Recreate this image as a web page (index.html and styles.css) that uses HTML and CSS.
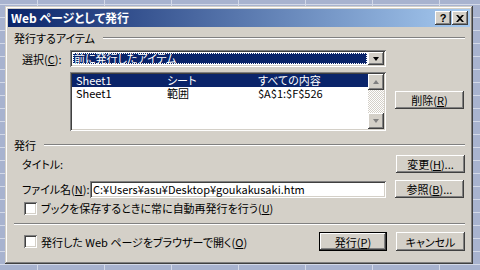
FILE: index.html
```html
<!DOCTYPE html>
<html lang="ja">
<head>
  <meta charset="UTF-8" />
  <title>Web ページとして発行</title>
  <link rel="stylesheet" href="styles.css">
</head>
<body>
  <div class="dialog">
    <div class="titlebar">
      <span class="title">Web ページとして発行</span>
      <div class="tb-buttons">
        <span class="tb-btn help">?</span>
        <span class="tb-btn">
          <svg width="8" height="7" viewBox="0 0 8 7"><path d="M0 0h2l2 2 2-2h2L5 3.5 8 7H6L4 5 2 7H0l3-3.5z" fill="#000"/></svg>
        </span>
      </div>
    </div>

    <div class="content">
      <!-- items to publish -->
      <div class="group"><span>発行するアイテム</span><div class="rule"></div></div>

      <div class="row select-row">
        <label class="lbl">選択(<u>C</u>):</label>
        <div class="combo">
          <div class="combo-text"><span>前に発行したアイテム</span></div>
          <div class="drop-btn"><span class="arrow-down"></span></div>
        </div>
      </div>

      <div class="row list-row">
        <div class="lbl"></div>
        <div class="listbox">
          <div class="items">
            <div class="item selected"><span>Sheet1</span><span>シート</span><span>すべての内容</span></div>
            <div class="item"><span>Sheet1</span><span>範囲</span><span>$A$1:$F$526</span></div>
          </div>
          <div class="scrollbar">
            <div class="sb-btn"><span class="arrow-up"></span></div>
            <div class="sb-track"></div>
            <div class="sb-btn"><span class="arrow-down"></span></div>
          </div>
        </div>
        <button class="btn">削除(<u>R</u>)</button>
      </div>

      <!-- publish -->
      <div class="group group2"><span>発行</span><div class="rule"></div></div>

      <div class="row title-row">
        <span class="lbl">タイトル:</span>
        <button class="btn">変更(<u>H</u>)...</button>
      </div>

      <div class="row file-row">
        <label class="lbl lbl-file">ファイル名(<u>N</u>):</label>
        <div class="field">C:¥Users¥asu¥Desktop¥goukakusaki.htm</div>
        <button class="btn">参照(<u>B</u>)...</button>
      </div>

      <div class="row check-row">
        <span class="checkbox"></span>
        <span>ブックを保存するときに常に自動再発行を行う(<u>U</u>)</span>
      </div>

      <div class="separator"></div>

      <div class="row bottom-row">
        <span class="checkbox"></span>
        <span>発行した Web ページをブラウザーで開く(<u>O</u>)</span>
        <button class="btn default">発行(<u>P</u>)</button>
        <button class="btn">キャンセル</button>
      </div>
    </div>
  </div>
</body>
</html>
```

FILE: styles.css
```css
body {
  margin: 0;
  width: 480px;
  height: 270px;
  overflow: hidden;
  background-color: #a8b3cf;
  background-image:
    linear-gradient(90deg, #d3d9e8 1px, transparent 1px),
    linear-gradient(#d3d9e8 1px, transparent 1px);
  background-size: 67px 100%, 100% 13px;
  background-position: 37px 0, 0 4px;
  font-family: "Noto Sans CJK JP", "Liberation Sans", sans-serif;
  font-size: 11px;
  font-feature-settings: "palt";
  color: #000;
}

.dialog {
  margin: 6px 0 0 5px;
  width: 468px;
  height: 258px;
  box-sizing: border-box;
  padding: 3px;
  background: #d4d0c8;
  box-shadow: inset -1px -1px #404040, inset 1px 1px #d4d0c8,
              inset -2px -2px #808080, inset 2px 2px #fff;
}

.titlebar {
  height: 18px;
  display: flex;
  align-items: center;
  justify-content: space-between;
  padding-left: 3px;
  background: linear-gradient(90deg, #0a246a, #a6caf0);
}

.title {
  color: #fff;
  font-weight: bold;
  font-size: 12px;
  line-height: 18px;
}

.tb-buttons {
  display: flex;
  gap: 1px;
  margin-right: 2px;
}

.tb-btn {
  width: 16px;
  height: 14px;
  display: flex;
  align-items: center;
  justify-content: center;
  background: #d4d0c8;
  box-shadow: inset -1px -1px #404040, inset 1px 1px #fff,
              inset -2px -2px #808080;
  font-family: "Liberation Sans", sans-serif;
  font-weight: bold;
  font-size: 11px;
  line-height: 1;
}

.content {
  padding: 4px 5px 0 6px;
}

.group {
  display: flex;
  align-items: center;
  gap: 8px;
  height: 14px;
}

.group2 {
  margin-top: 7px;
}

.rule, .separator {
  height: 0;
  border-top: 1px solid #808080;
  border-bottom: 1px solid #fff;
}

.rule {
  flex: 1;
}

.row {
  display: flex;
  align-items: center;
  padding-left: 8px;
}

.lbl {
  width: 48px;
  flex-shrink: 0;
}

.lbl-file {
  width: 68px;
}

u {
  text-decoration: underline;
}

.btn {
  margin-left: auto;
  width: 69px;
  height: 18px;
  padding: 0;
  border: none;
  background: #d4d0c8;
  box-shadow: inset -1px -1px #404040, inset 1px 1px #fff,
              inset -2px -2px #808080;
  font: inherit;
  font-feature-settings: "palt";
  color: #000;
}

.select-row {
  margin-top: 5px;
}

.combo {
  width: 316px;
  height: 17px;
  box-sizing: border-box;
  padding: 2px;
  display: flex;
  background: #fff;
  box-shadow: inset 1px 1px #808080, inset -1px -1px #fff,
              inset 2px 2px #404040, inset -2px -2px #d4d0c8;
}

.combo-text {
  flex: 1;
  padding: 1px;
}

.combo-text span {
  display: block;
  height: 100%;
  background: #0a246a;
  color: #fff;
  outline: 1px dotted #fff;
  outline-offset: -1px;
  line-height: 11px;
  padding-left: 1px;
}

.drop-btn, .sb-btn {
  width: 16px;
  height: 13px;
  display: flex;
  align-items: center;
  justify-content: center;
  background: #d4d0c8;
  box-shadow: inset -1px -1px #404040, inset 1px 1px #fff,
              inset -2px -2px #808080;
}

.arrow-down, .arrow-up {
  width: 0;
  height: 0;
  border-left: 3.5px solid transparent;
  border-right: 3.5px solid transparent;
}

.arrow-down {
  border-top: 4px solid #000;
}

.arrow-up {
  border-bottom: 4px solid #000;
}

.sb-btn .arrow-up {
  border-bottom-color: #808080;
}

.sb-btn .arrow-down {
  border-top-color: #808080;
}

.list-row {
  margin-top: 5px;
}

.list-row .btn {
  margin-left: 9px;
  margin-top: -3px;
}

.listbox {
  width: 316px;
  height: 59px;
  box-sizing: border-box;
  padding: 2px;
  display: flex;
  background: #fff;
  box-shadow: inset 1px 1px #808080, inset -1px -1px #fff,
              inset 2px 2px #404040, inset -2px -2px #d4d0c8;
}

.items {
  flex: 1;
}

.item {
  display: grid;
  grid-template-columns: 91px 91px 1fr;
  height: 13px;
  line-height: 13px;
  padding-left: 4px;
}

.item.selected {
  background: #0a246a;
  color: #fff;
}

.scrollbar {
  width: 16px;
  display: flex;
  flex-direction: column;
}

.sb-btn {
  height: 16px;
}

.sb-track {
  flex: 1;
  background: repeating-conic-gradient(#fff 0 25%, #d4d0c8 0 50%) 0 0 / 2px 2px;
}

.title-row {
  margin-top: 3px;
  height: 18px;
}

.file-row {
  margin-top: 7px;
  height: 18px;
}

.file-row .btn {
  margin-left: 9px;
}

.field {
  width: 296px;
  height: 17px;
  box-sizing: border-box;
  padding: 0 3px;
  line-height: 17px;
  background: #fff;
  box-shadow: inset 1px 1px #808080, inset -1px -1px #fff,
              inset 2px 2px #404040, inset -2px -2px #d4d0c8;
}

.check-row {
  margin-top: 3px;
  height: 14px;
  padding-left: 10px;
  gap: 4px;
}

.checkbox {
  width: 13px;
  height: 13px;
  flex-shrink: 0;
  background: #fff;
  box-shadow: inset 1px 1px #808080, inset -1px -1px #fff,
              inset 2px 2px #404040, inset -2px -2px #d4d0c8;
}

.separator {
  margin-top: 8px;
}

.bottom-row {
  margin-top: 7px;
  height: 19px;
  padding-left: 10px;
  gap: 4px;
}

.bottom-row .btn {
  height: 19px;
}

.bottom-row .default {
  width: 68px;
  margin-right: 5px;
  box-shadow: inset 0 0 0 1px #000, inset -2px -2px #404040,
              inset 2px 2px #fff, inset -3px -3px #808080;
}

.bottom-row .default + .btn {
  margin-left: 0;
}
```
